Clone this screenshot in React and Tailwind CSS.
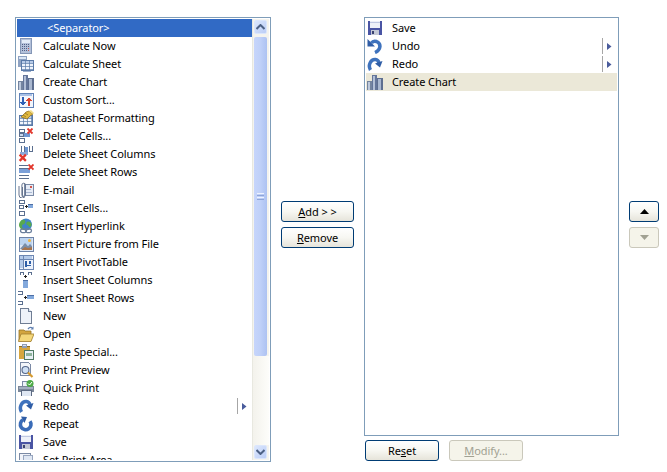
import React from "react";

const S = ({ children }) => (
  <svg width="16" height="16" viewBox="0 0 16 16" className="block" shapeRendering="crispEdges">
    {children}
  </svg>
);
const R = (p) => <rect {...p} />;
const RedX = ({ x = 0, y = 0, k = 1 }) => (
  <g transform={`translate(${x} ${y}) scale(${k})`} shapeRendering="auto">
    <path d="M0.500 0.500L5.500 5.500M5.500 0.500L0.500 5.500" stroke="#e2362b" strokeWidth="1.800" fill="none" />
  </g>
);
const Box = ({ x, y, w = 4, h = 3, s = "#5b6f8f", f = "#fff" }) => (
  <rect x={x + 0.5} y={y + 0.5} width={w} height={h} fill={f} stroke={s} />
);
const Grid = ({ x, y, w, h, cx = 4, cy = 3, s = "#5a7aa8", f = "#eef3fb", head = "#b8cbe8" }) => {
  const l = [];
  for (let i = 1; i * cx < w; i++) l.push(<path key={"v" + i} d={`M${x + i * cx + 0.5} ${y}v${h}`} stroke={s} strokeOpacity=".7" />);
  for (let i = 1; i * cy < h; i++) l.push(<path key={"h" + i} d={`M${x} ${y + i * cy + 0.5}h${w}`} stroke={s} strokeOpacity=".7" />);
  return (
    <g>
      <rect x={x + 0.5} y={y + 0.5} width={w} height={h} fill={f} stroke={s} />
      <rect x={x + 1} y={y + 1} width={w - 1} height={cy - 1} fill={head} />
      {l}
    </g>
  );
};

const CalcNow = () => (
  <S>
    <R x="2" y="0" width="12" height="16" fill="#8496b6" />
    <R x="3" y="1" width="10" height="14" fill="#b3c0d9" />
    <R x="4" y="2" width="8" height="3" fill="#e3ecf8" />
    {[6, 8, 10, 12].map((y) =>
      [4, 6, 8, 10].map((x) => (
        <R key={x + "-" + y} x={x} y={y} width="1" height="1" fill={x === 10 && y > 8 ? "#c05a58" : "#4f5f85"} />
      ))
    )}
  </S>
);
const CalcSheet = () => (
  <S>
    <R x="0" y="0" width="9" height="11" fill="#8ea2c2" />
    <R x="1" y="1" width="7" height="2" fill="#dbe6f5" />
    <Grid x={3} y={4} w={12} h={10} cx={4} cy={3} />
    <R x="5" y="15" width="8" height="1" fill="#9fb0cc" />
  </S>
);
const Chart = () => (
  <S>
    <R x="0" y="7" width="5" height="9" fill="#74849f" />
    <R x="1" y="8" width="2" height="8" fill="#bdc9dc" />
    <R x="5" y="1" width="5" height="15" fill="#65769a" />
    <R x="6" y="2" width="2" height="14" fill="#b3c0d6" />
    <R x="10" y="4" width="6" height="12" fill="#5e6f90" />
    <R x="11" y="5" width="3" height="11" fill="#aab8d0" />
  </S>
);
const Sort = () => (
  <S>
    <R x="1" y="1" width="14" height="14" fill="#f2f5fb" stroke="#5f82b8" />
    <R x="2" y="2" width="12" height="2" fill="#a7c0e6" />
    <path d="M4 5h2v5h2l-3 4-3-4h2z" fill="#2f5fb5" />
    <path d="M11 14h-1V9H8l3-4 3 4h-2v5z" fill="#d8432f" />
  </S>
);
const DataFmt = () => (
  <S>
    <Grid x={1} y={5} w={13} h={10} cx={4} cy={3} f="#f4f7fc" />
    <g shapeRendering="auto">
      <path d="M3 7l5-5 3-1 4 3-3 2-3 3z" fill="#e0b83f" stroke="#8a6a1c" strokeWidth=".7" />
      <path d="M5 5l3 2M7 3l3 2" stroke="#8a6a1c" strokeWidth=".7" />
      <path d="M11 1l4 3 1-1-3-3z" fill="#f1dc8c" />
    </g>
  </S>
);
const DelCells = () => (
  <S>
    <Box x={1} y={1} w={5} h={3} />
    <R x="6" y="5" width="6" height="4" fill="#6f97d2" />
    <Box x={1} y={5} w={4} h={3} f="#c8d8ef" />
    <Box x={1} y={10} w={5} h={4} />
    <RedX x={9} y={0} />
  </S>
);
const DelCols = () => (
  <S>
    <path d="M3.500 0V7H6.500V0" fill="#fff" stroke="#5b6f8f" />
    <R x="7" y="1" width="3" height="8" fill="#6f97d2" />
    <path d="M11.500 0V5H14.500V0" fill="#fff" stroke="#5b6f8f" />
    <R x="2" y="6" width="8" height="3" fill="#8aa8d8" />
    <RedX x={1} y={8} k={1.250} />
  </S>
);
const DelRows = () => (
  <S>
    <path d="M1 1.500H10M1 4.500H11" stroke="#5b6f8f" />
    <R x="1" y="5" width="11" height="4" fill="#7ba0d8" />
    <path d="M1 11.500H11M1 14.500H11" stroke="#5b6f8f" />
    <RedX x={10} y={0} />
  </S>
);
const Email = () => (
  <S>
    <R x="6" y="2" width="9" height="11" fill="#e6ecf6" />
    <path d="M6.500 2.500H15.500V13.500H6.500Z" fill="none" stroke="#7b8aa5" />
    <R x="8" y="7" width="5" height="1" fill="#a9b8d2" />
    <R x="8" y="10" width="6" height="1" fill="#a9b8d2" />
    <R x="12" y="4" width="2" height="2" fill="#d4574e" />
    <g shapeRendering="auto">
      <path d="M4.500 5v8a1.500 1.500 0 0 0 3 0V3a1.800 1.800 0 0 0-3.600 0V13a3 3 0 0 0 3 3" fill="none" stroke="#66758f" strokeWidth="1" />
      <path d="M1 4v9a3 3 0 0 0 3 3" fill="none" stroke="#66758f" strokeWidth="1" />
    </g>
  </S>
);
const InsCells = () => (
  <S>
    <Box x={1} y={0} w={5} h={3} />
    <Box x={1} y={5} w={4} h={3} />
    <Box x={1} y={11} w={5} h={4} />
    <R x="7" y="6" width="3" height="1" fill="#222" />
    <R x="8" y="5" width="1" height="3" fill="#222" />
    <R x="10" y="4" width="5" height="4" fill="#83a9dc" />
    <R x="10" y="4" width="5" height="1" fill="#4d6fa6" />
  </S>
);
const Hyperlink = () => (
  <S>
    <g shapeRendering="auto">
      <circle cx="8" cy="6.500" r="6" fill="#3f83c9" />
      <path d="M4 2c3-1 4 1 3 3s-3 1-3 3 2 3 3 4c-3 0-6-2-6-5 0-2 1-4 3-5zM9 4c2-1 4 0 4.500 2s-1 3-2 3-1-2-2-2-2-2-.5-3z" fill="#58a84f" />
      <rect x="2.500" y="11" width="6" height="3.600" rx="1.800" fill="none" stroke="#6b7f9c" strokeWidth="1.300" />
      <rect x="7.500" y="11" width="6" height="3.600" rx="1.800" fill="none" stroke="#6b7f9c" strokeWidth="1.300" />
    </g>
  </S>
);
const Picture = () => (
  <S>
    <R x="1" y="1" width="14" height="14" fill="#dfe8f6" stroke="#6d83a8" />
    <R x="2" y="2" width="12" height="7" fill="#bcd4f0" />
    <g shapeRendering="auto">
      <path d="M2 13l5-6 3 3 2-2 2 2v3z" fill="#7a8ea8" />
      <path d="M3 14l4-3 3 1 4-1v3z" fill="#a8744c" />
      <circle cx="11.500" cy="4.500" r="1.500" fill="#f0b43c" />
    </g>
  </S>
);
const Pivot = () => (
  <S>
    <R x="1" y="1" width="14" height="14" fill="#eef3fb" stroke="#6d87b3" />
    <R x="2" y="2" width="12" height="3" fill="#b5cbea" />
    <R x="2" y="2" width="3" height="12" fill="#b5cbea" />
    <path d="M5.500 1v14M1 5.500h14" stroke="#6d87b3" />
    <R x="7" y="7" width="2" height="6" fill="#2d5ea8" />
    <R x="11" y="7" width="2" height="3" fill="#2d5ea8" />
    <R x="8" y="11" width="5" height="1" fill="#2d5ea8" />
  </S>
);
const InsCols = () => (
  <S>
    <path d="M2.500 3V0.500H5.500V3M10.500 3V0.500H13.500V3" fill="none" stroke="#5b6f8f" />
    <R x="7" y="3" width="1" height="3" fill="#222" />
    <R x="6" y="4" width="3" height="1" fill="#222" />
    <R x="5" y="8" width="5" height="8" fill="#83a9dc" />
    <R x="5" y="8" width="5" height="1" fill="#4d6fa6" />
  </S>
);
const InsRows = () => (
  <S>
    <path d="M0 1.500h4.500v3H0M0 11.500h4.500v3H0" fill="none" stroke="#5b6f8f" />
    <R x="6" y="7" width="3" height="1" fill="#222" />
    <R x="7" y="6" width="1" height="3" fill="#222" />
    <R x="9" y="5" width="7" height="4" fill="#83a9dc" />
    <R x="9" y="5" width="7" height="1" fill="#4d6fa6" />
  </S>
);
const NewDoc = () => (
  <S>
    <path d="M2.500 0.500H10.500L13.500 3.500V15.500H2.500Z" fill="#eef2f9" stroke="#6f7d94" />
    <path d="M10.500 .5V3.500H13.500" fill="#d7dfec" stroke="#6f7d94" />
  </S>
);
const OpenF = () => (
  <S>
    <g shapeRendering="auto">
      <path d="M1 4h5l1 1h6v10H1z" fill="#d3a53f" stroke="#96742a" strokeWidth=".8" />
      <path d="M3 8h13l-3 7.500H0.500z" fill="#f4d77a" stroke="#a27f2e" strokeWidth=".8" />
      <path d="M10 3c1.500-2 3-2 4.500-1" fill="none" stroke="#5f7fb0" strokeWidth="1.300" />
      <path d="M15.500 0.500v3h-3z" fill="#5f7fb0" />
    </g>
  </S>
);
const Paste = () => (
  <S>
    <R x="1" y="2" width="11" height="13" fill="#d6a63f" />
    <R x="1" y="2" width="11" height="1" fill="#8a6a20" />
    <R x="4" y="0" width="5" height="4" fill="#8f9db5" />
    <R x="5" y="1" width="3" height="1" fill="#dfe6f1" />
    <R x="6" y="6" width="10" height="10" fill="#4f7a64" />
    <R x="7" y="7" width="8" height="8" fill="#e8f0f6" />
    <R x="8" y="9" width="6" height="3" fill="#8fb39c" />
  </S>
);
const Preview = () => (
  <S>
    <path d="M2.500 0.500H10.500L12.500 2.500V13.500H2.500Z" fill="#f3f6fb" stroke="#7b8aa5" />
    <g shapeRendering="auto">
      <circle cx="7.500" cy="8" r="3.500" fill="#cfe0f5" stroke="#55678a" strokeWidth="1.100" />
      <path d="M10 10.500l4.500 4.500" stroke="#d69a2f" strokeWidth="2.200" />
    </g>
  </S>
);
const QuickPrint = () => (
  <S>
    <R x="4" y="1" width="8" height="5" fill="#eef2f8" stroke="#7b8aa5" />
    <R x="0" y="6" width="16" height="6" fill="#7b8799" />
    <R x="1" y="7" width="14" height="2" fill="#a3aec0" />
    <R x="3" y="10" width="10" height="6" fill="#dfe7f3" stroke="#5c6a82" />
    <g shapeRendering="auto">
      <circle cx="12" cy="3.500" r="3.500" fill="#4caa46" />
      <path d="M10 3.500l1.500 1.500 2.500-3" stroke="#fff" strokeWidth="1" fill="none" />
    </g>
  </S>
);
const Redo = () => (
  <S>
    <g shapeRendering="auto">
      <path d="M3.500 14C0.500 9 4 3 8.500 3.500C10.500 3.700 11.500 5 12 7" fill="none" stroke="#3e72bd" strokeWidth="3.500" />
      <path d="M15.500 5L13 11.500L8 7.500Z" fill="#2f5da6" />
    </g>
  </S>
);
const Undo = () => (
  <S>
    <g shapeRendering="auto">
      <path d="M8 14.500C14 12 14.500 5.500 9.500 3.500C7.500 2.800 5.500 3.500 4.500 5" fill="none" stroke="#3e72bd" strokeWidth="3.500" />
      <path d="M0.500 1V8.500H8Z" fill="#2f5da6" />
    </g>
  </S>
);
const Repeat = () => (
  <S>
    <g shapeRendering="auto">
      <path d="M5 3.800a5.300 5.300 0 1 0 7 1.500" fill="none" stroke="#3a6cb8" strokeWidth="3.600" />
      <path d="M3 0.500l6 .5-2.500 6z" fill="#2f5da6" />
    </g>
  </S>
);
const Save = () => (
  <S>
    <R x="1" y="1" width="14" height="14" fill="#4a55a4" />
    <R x="3" y="1" width="10" height="7" fill="#eef1f8" />
    <R x="3" y="2" width="10" height="1" fill="#bfc8e2" />
    <R x="4" y="10" width="8" height="5" fill="#c3c8d6" />
    <R x="5" y="11" width="2" height="3" fill="#3a4270" />
  </S>
);
const PrintArea = () => (
  <S>
    <R x="1" y="1" width="11" height="13" fill="#f0f3f9" stroke="#7b8aa5" />
    <R x="5" y="3" width="9" height="10" fill="#dfe7f3" stroke="#98a6bf" />
  </S>
);

const left = [
  ["Calculate Now", CalcNow],
  ["Calculate Sheet", CalcSheet],
  ["Create Chart", Chart],
  ["Custom Sort...", Sort],
  ["Datasheet Formatting", DataFmt],
  ["Delete Cells...", DelCells],
  ["Delete Sheet Columns", DelCols],
  ["Delete Sheet Rows", DelRows],
  ["E-mail", Email],
  ["Insert Cells...", InsCells],
  ["Insert Hyperlink", Hyperlink],
  ["Insert Picture from File", Picture],
  ["Insert PivotTable", Pivot],
  ["Insert Sheet Columns", InsCols],
  ["Insert Sheet Rows", InsRows],
  ["New", NewDoc],
  ["Open", OpenF],
  ["Paste Special...", Paste],
  ["Print Preview", Preview],
  ["Quick Print", QuickPrint],
  ["Redo", Redo, true],
  ["Repeat", Repeat],
  ["Save", Save],
  ["Set Print Area", PrintArea],
];
const right = [
  ["Save", Save],
  ["Undo", Undo, true],
  ["Redo", Redo, true],
  ["Create Chart", Chart],
];

const Sub = ({ right: r }) => (
  <div className={`flex items-center h-[16px] shrink-0 ${r ? "mr-[5px]" : "mr-[6px]"}`}>
    <div className="w-px h-[16px] bg-[#a6a6a6] mr-[4px]" />
    <svg width="5" height="7" viewBox="0 0 5 7" className="block"><path d="M0 0L4.500 3.500L0 7Z" fill="#4a5c9c" /></svg>
  </div>
);

const Row = ({ label, Icon, sub, hi, r }) => (
  <div className={`flex items-center h-[18px] shrink-0 ${hi ? "bg-[#ebe8d8]" : ""}`}>
    <div className="ml-[1px] w-[16px] shrink-0"><Icon /></div>
    <span className="ml-[9px] flex-1 whitespace-nowrap leading-[18px]">{label}</span>
    {sub && <Sub right={r} />}
  </div>
);

const Btn = ({ children, disabled, className = "" }) => (
  <div
    className={`flex items-center justify-center h-[21px] rounded-[3px] border leading-none ${
      disabled
        ? "border-[#cac8bb] bg-[#f5f4ea] text-[#a1a192]"
        : "border-[#003c74] bg-gradient-to-b from-white via-[#f7f7f2] to-[#e6e4da] text-black"
    } ${className}`}
  >
    {children}
  </div>
);

const ScrollBtn = ({ up }) => (
  <div className="mx-[1px] h-[14px] w-[13px] flex items-center justify-center rounded-[2px] border border-[#dbe6fc] bg-gradient-to-br from-[#dce7fd] to-[#bbcdf6]">
    <svg width="9" height="6" viewBox="0 0 9 6" className="block">
      <path d={up ? "M0.500 5L4.500 1L8.500 5" : "M0.500 1L4.500 5L8.500 1"} fill="none" stroke="#4d6185" strokeWidth="2" />
    </svg>
  </div>
);

export default function App() {
  return (
    <div
      className="w-[667px] h-[472px] bg-white flex pt-[17px] pl-[15px] text-[11px] tracking-[-0.08px] text-black overflow-hidden"
      style={{ fontFamily: '"Noto Sans", sans-serif' }}
    >
      {/* left list */}
      <div className="w-[256px] h-[445px] border border-[#7f9db9] flex p-px">
        <div className="flex-1 min-w-0 overflow-hidden flex flex-col -mr-px h-[441px]">
          <div className="h-[18px] shrink-0 bg-[#316ac5] text-white leading-[18px] pl-[30px]">&lt;Separator&gt;</div>
          {left.map(([l, I, s]) => (
            <Row key={l} label={l} Icon={I} sub={s} />
          ))}
        </div>
        <div className="w-[17px] shrink-0 flex flex-col border-l border-[#e8e8e0] bg-[#f4f3ee] pt-px pb-[1px]">
          <ScrollBtn up />
          <div className="mx-[1px] mt-[3px] h-[319px] w-[13px] rounded-[2px] bg-gradient-to-r from-[#c6d5fb] via-[#bfd0f8] to-[#adc2f2] flex flex-col items-center justify-center gap-px">
            <div className="w-[7px] h-px bg-[#eef3ff]" />
            <div className="w-[7px] h-px bg-[#8fa6d8]" />
            <div className="w-[7px] h-px bg-[#eef3ff]" />
            <div className="w-[7px] h-px bg-[#8fa6d8]" />
          </div>
          <div className="flex-1 bg-gradient-to-r from-[#f3f2ec] to-[#fdfdfa]" />
          <ScrollBtn />
        </div>
      </div>

      {/* add / remove */}
      <div className="ml-[10px] w-[73px] pt-[184px] flex flex-col gap-[5px]">
        <Btn><span><u>A</u>dd &gt; &gt;</span></Btn>
        <Btn><span><u>R</u>emove</span></Btn>
      </div>

      {/* right list */}
      <div className="ml-[10px] w-[255px] flex flex-col">
        <div className="h-[419px] border border-[#7f9db9] pt-px pl-px pr-px flex flex-col">
          {right.map(([l, I, s], i) => (
            <Row key={l} label={l} Icon={I} sub={s} hi={i === 3} r />
          ))}
        </div>
        <div className="flex gap-[10px] mt-[4px] pl-px">
          <Btn className="w-[74px]"><span>Re<u>s</u>et</span></Btn>
          <Btn className="w-[74px]" disabled><span><u>M</u>odify...</span></Btn>
        </div>
      </div>

      {/* up / down */}
      <div className="ml-[10px] w-[30px] pt-[184px] flex flex-col gap-[5px]">
        <Btn>
          <svg width="9" height="5" viewBox="0 0 9 5" className="block"><path d="M4.500 0L9 5H0Z" fill="#000" /></svg>
        </Btn>
        <Btn disabled>
          <svg width="9" height="5" viewBox="0 0 9 5" className="block"><path d="M4.500 5L9 0H0Z" fill="#a1a192" /></svg>
        </Btn>
      </div>
    </div>
  );
}
